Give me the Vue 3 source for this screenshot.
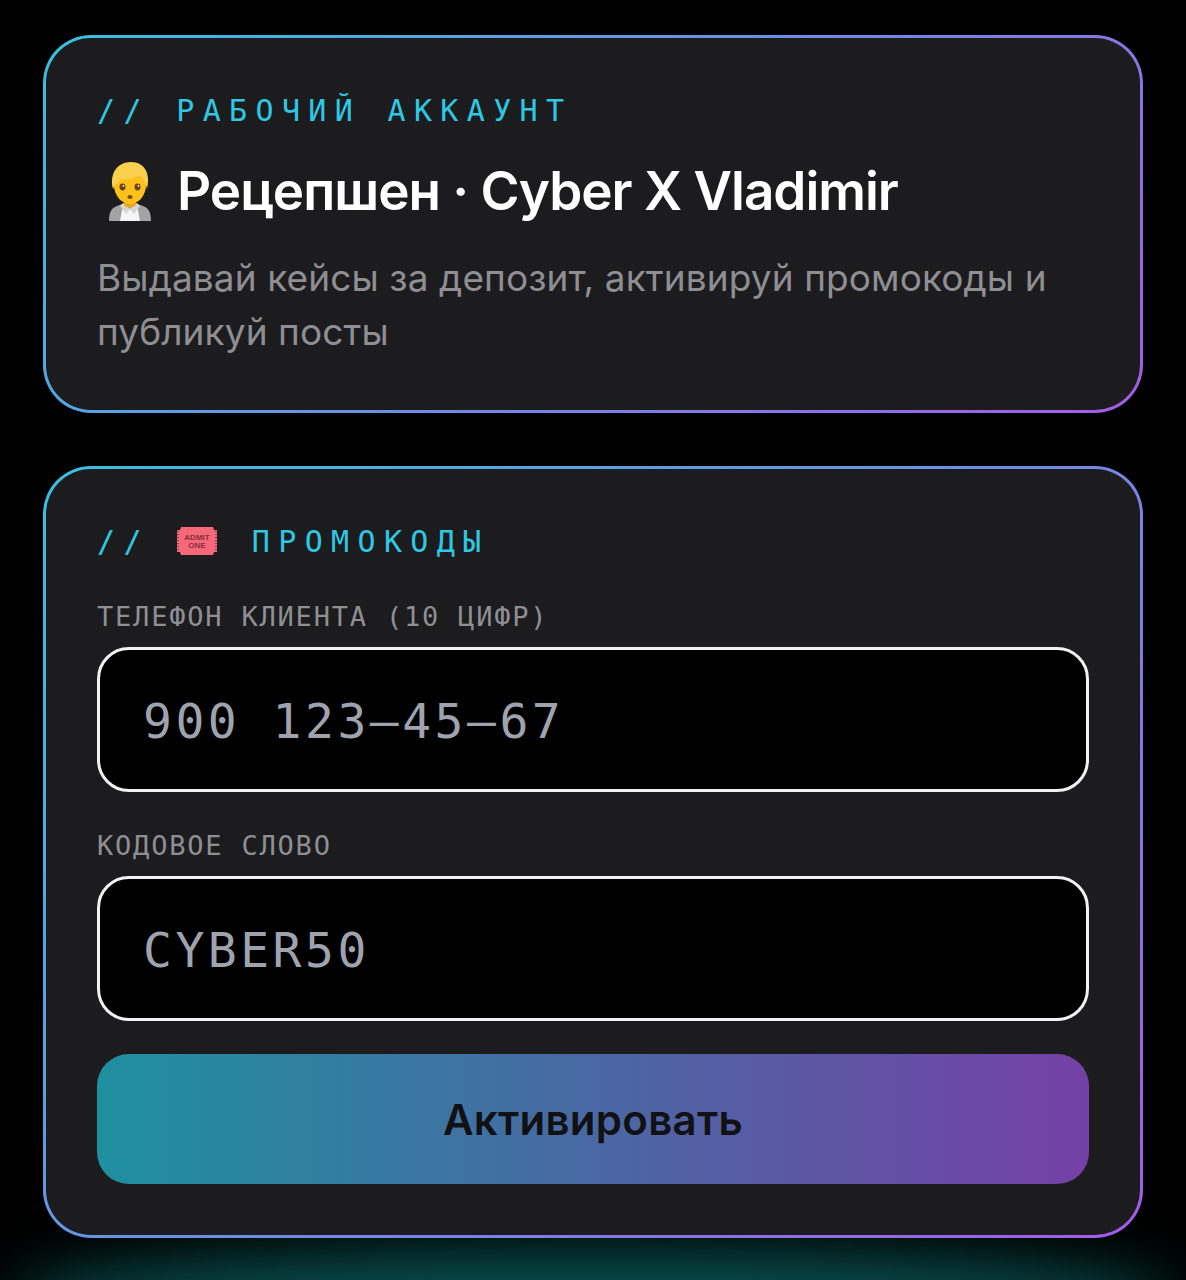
<script setup>
const fields = [
  { label: 'ТЕЛЕФОН КЛИЕНТА (10 ЦИФР)', placeholder: '900 123–45–67' },
  { label: 'КОДОВОЕ СЛОВО', placeholder: 'CYBER50' },
]
</script>

<template>
  <div class="page">
    <section class="card">
      <div class="eyebrow">// РАБОЧИЙ АККАУНТ</div>
      <h1 class="title">
        <svg class="person" width="42" height="59" viewBox="0 0 42 59">
          <path d="M0 59c0-8 2-13 8-15l8-3h10l8 3c6 2 8 7 8 15z" fill="#a3a3a3" />
          <path d="M14 43l7 4 7-4 3 16H11z" fill="#f5f5f5" />
          <path d="M14 41l7 6-4 5-6-8zM28 41l-7 6 4 5 6-8z" fill="#d6d6d6" />
          <rect x="15" y="34" width="12" height="11" rx="4" fill="#eda80c" />
          <path d="M5 23C5 13 11 7 21 7s16 6 16 16c0 11-8 19-16 19S5 34 5 23z" fill="#fcc21b" />
          <path d="M4 27C0 11 9 0 22 0c13 0 20 11 16 27-1-6-4-11-8-14-5 4-11 5-16 4-4 2-8 5-10 10z" fill="#fad14f" />
          <ellipse cx="13.5" cy="25" rx="3" ry="3.4" fill="#6b431c" />
          <ellipse cx="28.5" cy="25" rx="3" ry="3.4" fill="#6b431c" />
          <circle cx="14.4" cy="23.8" r="0.9" fill="#fff" />
          <circle cx="29.4" cy="23.8" r="0.9" fill="#fff" />
          <ellipse cx="21" cy="35" rx="2.6" ry="1.9" fill="#7d4a1c" />
        </svg>
        <span>Рецепшен · Cyber X Vladimir</span>
      </h1>
      <p class="lead">Выдавай кейсы за депозит, активируй промокоды и публикуй посты</p>
    </section>

    <section class="card">
      <div class="eyebrow promo">
        <span>//</span>
        <svg class="ticket" width="40" height="28" viewBox="0 0 40 28">
          <path d="M4 0h32l1 3h3v22h-3l-1 3H4l-1-3H0V3h3z" fill="#f4687a" />
          <path d="M1 4v20M39 4v20" stroke="#1c1c1e" stroke-width="1" stroke-dasharray="1 2" />
          <text x="20" y="13" text-anchor="middle" class="ticket-text">ADMIT</text>
          <text x="20" y="21" text-anchor="middle" class="ticket-text">ONE</text>
        </svg>
        <span>ПРОМОКОДЫ</span>
      </div>
      <div v-for="field in fields" :key="field.label" class="field">
        <label class="field-label">{{ field.label }}</label>
        <input class="field-input" type="text" :placeholder="field.placeholder" />
      </div>
      <button class="submit" type="button">Активировать</button>
    </section>
    <div class="glow"></div>
  </div>
</template>

<style>
html,
body {
  background: #000;
}
</style>

<style scoped>
.page {
  position: relative;
  box-sizing: border-box;
  height: 1280px;
  padding: 35px 43px 0;
  overflow: hidden;
  background: #000;
  font-family: Inter, 'Noto Sans', sans-serif;
}

.card {
  position: relative;
  z-index: 1;
  box-sizing: border-box;
  padding: 53px 51px 51px;
  border: 3px solid transparent;
  border-radius: 48px;
  background:
    linear-gradient(#1c1c1e, #1c1c1e) padding-box,
    linear-gradient(135deg, #38c0e0, #a45be8) border-box;
}

.card + .card {
  margin-top: 53px;
}

.eyebrow {
  color: #2ec8e4;
  font-family: 'DejaVu Sans Mono', monospace;
  font-size: 30px;
  line-height: 40px;
  letter-spacing: 8.35px;
  white-space: pre;
}

.promo {
  display: flex;
  align-items: center;
  gap: 34px;
}

.ticket {
  flex: none;
  margin-left: -7px;
  margin-top: -2px;
  margin-right: 1px;
}

.ticket-text {
  fill: #8a2f3a;
  font-family: 'Liberation Sans', sans-serif;
  font-size: 8px;
  font-weight: 700;
  letter-spacing: 0;
}

.title {
  display: flex;
  align-items: center;
  gap: 26px;
  margin: 30px 0 0;
  color: #fff;
  font-size: 53px;
  font-weight: 600;
  line-height: 60px;
  letter-spacing: -1px;
}

.person {
  flex: none;
  margin-left: 12px;
}

.lead {
  margin: 30px 0 0;
  color: #8e8e93;
  font-size: 37px;
  line-height: 54px;
  letter-spacing: 0.1px;
}

.field {
  margin-top: 37px;
}

.field + .field {
  margin-top: 36px;
}

.field-label {
  display: block;
  color: #8e8e93;
  font-family: 'DejaVu Sans Mono', monospace;
  font-size: 27px;
  line-height: 36px;
  letter-spacing: 1.8px;
}

.field-input {
  display: block;
  box-sizing: border-box;
  width: 100%;
  height: 145px;
  margin-top: 12px;
  padding: 2px 43px 0;
  border: 3px solid #f2f2f2;
  border-radius: 32px;
  outline: none;
  background: #000;
  color: #fff;
  font-family: 'DejaVu Sans Mono', monospace;
  font-size: 48px;
  letter-spacing: 3.5px;
}

.field-input::placeholder {
  color: #9fa3ae;
  opacity: 1;
}

.submit {
  display: block;
  width: 100%;
  height: 130px;
  margin-top: 33px;
  border: none;
  border-radius: 32px;
  background: linear-gradient(90deg, #1e90a0, #7540a6);
  color: #111114;
  font-family: Inter, 'Noto Sans', sans-serif;
  font-size: 42px;
  font-weight: 600;
  letter-spacing: 0.3px;
}

.glow {
  position: absolute;
  left: 40px;
  right: 40px;
  bottom: -40px;
  height: 40px;
  border-radius: 50%;
  box-shadow: 0 0 60px 30px rgba(20, 160, 160, 0.5);
}
</style>
